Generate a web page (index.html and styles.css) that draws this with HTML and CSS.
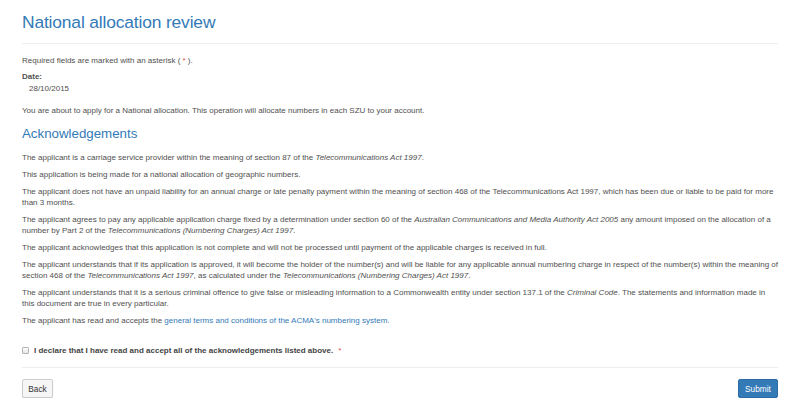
FILE: index.html
```html
<!DOCTYPE html>
<html lang="en">
<head>
<meta charset="utf-8">
<title>National allocation review</title>
<link rel="stylesheet" href="styles.css">
</head>
<body>
<main class="page">
  <h1 class="title">National allocation review</h1>
  <hr class="rule rule-top">
  <p class="note">Required fields are marked with an asterisk ( <span class="req">*</span> ).</p>
  <div class="field">
    <div class="field-label">Date:</div>
    <div class="field-value">28/10/2015</div>
  </div>
  <p class="intro">You are about to apply for a National allocation. This operation will allocate numbers in each SZU to your account.</p>
  <h2 class="subtitle">Acknowledgements</h2>
  <div class="acks">
    <p>The applicant is a carriage service provider within the meaning of section 87 of the <em>Telecommunications Act 1997</em>.</p>
    <p>This application is being made for a national allocation of geographic numbers.</p>
    <p>The applicant does not have an unpaid liability for an annual charge or late penalty payment within the meaning of section 468 of the Telecommunications Act 1997, which has been due or liable to be paid for more than 3 months.</p>
    <p>The applicant agrees to pay any applicable application charge fixed by a determination under section 60 of the <em>Australian Communications and Media Authority Act 2005</em> any amount imposed on the allocation of a number by Part 2 of the <em>Telecommunications (Numbering Charges) Act 1997</em>.</p>
    <p>The applicant acknowledges that this application is not complete and will not be processed until payment of the applicable charges is received in full.</p>
    <p>The applicant understands that if its application is approved, it will become the holder of the number(s) and will be liable for any applicable annual numbering charge in respect of the number(s) within the meaning of section 468 of the <em>Telecommunications Act 1997</em>, as calculated under the <em>Telecommunications (Numbering Charges) Act 1997</em>.</p>
    <p>The applicant understands that it is a serious criminal offence to give false or misleading information to a Commonwealth entity under section 137.1 of the <em>Criminal Code</em>. The statements and information made in this document are true in every particular.</p>
    <p>The applicant has read and accepts the <a class="link" href="#">general terms and conditions of the ACMA's numbering system.</a></p>
  </div>
  <label class="declare">
    <input type="checkbox" class="check">
    <span class="declare-text">I declare that I have read and accept all of the acknowledgements listed above.</span>
    <span class="req">*</span>
  </label>
  <hr class="rule rule-bottom">
  <div class="actions">
    <button class="btn btn-default" type="button">Back</button>
    <button class="btn btn-primary" type="button">Submit</button>
  </div>
</main>
</body>
</html>
```

FILE: styles.css
```css
html, body {
  margin: 0;
  padding: 0;
  background: #ffffff;
}

body {
  font-family: "Liberation Sans", Arial, sans-serif;
  font-size: 8px;
  line-height: 11px;
  color: #505050;
}

.page {
  padding: 0 22px 0 22px;
  display: flex;
  flex-direction: column;
}

.title {
  margin: 10px 0 0 0;
  font-size: 17.4px;
  line-height: 24px;
  letter-spacing: -0.15px;
  font-weight: normal;
  color: #337ab7;
}

.rule {
  border: 0;
  border-top: 1px solid #eeeeee;
  margin: 0;
  width: 100%;
}

.rule-top {
  margin-top: 9px;
}

.note {
  margin: 11px 0 0 0;
}

.req {
  color: #d9534f;
}

.field {
  margin-top: 5px;
}

.field-label {
  font-weight: bold;
}

.field-value {
  padding-left: 7px;
  margin-top: 1px;
}

.intro {
  margin: 11px 0 0 0;
}

.subtitle {
  margin: 9px 0 0 0;
  font-size: 13.3px;
  line-height: 18px;
  font-weight: normal;
  color: #337ab7;
}

.acks {
  margin-top: 9px;
}

.acks p {
  margin: 0 0 6px 0;
}

.link {
  color: #337ab7;
  text-decoration: none;
}

.declare {
  display: flex;
  align-items: center;
  gap: 4px;
  margin-top: 13px;
  font-weight: bold;
  font-size: 8px;
  color: #444444;
}

.check {
  -webkit-appearance: none;
  appearance: none;
  margin: 0 1px 0 0;
  width: 7px;
  height: 7px;
  border: 1px solid #b5b5b5;
  border-radius: 1px;
  background: linear-gradient(#fdfdfd, #e6e6e6);
  box-sizing: border-box;
}

.declare .req {
  margin-left: 1px;
  font-weight: normal;
}

.rule-bottom {
  margin-top: 11px;
}

.actions {
  display: flex;
  justify-content: space-between;
  margin-top: 11px;
}

.btn {
  font-family: "Liberation Sans", Arial, sans-serif;
  font-size: 8.3px;
  height: 19px;
  padding: 0;
  border-radius: 2px;
  border: 1px solid #cccccc;
}

.btn-default {
  background: #f6f6f6;
  color: #333333;
  width: 31px;
  box-shadow: 0 1px 1px rgba(0,0,0,0.08);
}

.btn-primary {
  background: #337ab7;
  border-color: #2e6da4;
  color: #ffffff;
  width: 40px;
}
```
